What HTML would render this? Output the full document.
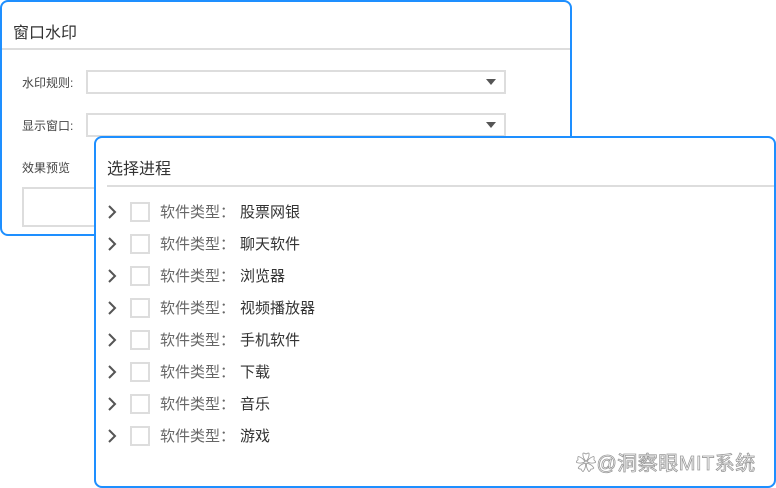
<!DOCTYPE html>
<html><head><meta charset="utf-8"><style>
*{margin:0;padding:0;box-sizing:border-box}
body{width:776px;height:488px;background:#fff;position:relative;overflow:hidden;font-family:"Liberation Sans","Noto Sans CJK SC",sans-serif;color:#333}
.p{position:absolute;border:2px solid #1e8fff;border-radius:8px;background:#fff}
.t{position:absolute;font-size:16px;color:#333;white-space:nowrap}
.l{position:absolute;font-size:12px;color:#444;white-space:nowrap}
.sel{position:absolute;left:84px;width:420px;height:24px;border:2px solid #ddd;background:#fff}
.sel:after{content:"";position:absolute;right:8px;top:7px;width:10px;height:6px;background:#555;clip-path:polygon(0 0,100% 0,50% 100%)}
.row{position:absolute;left:106px;height:24px;font-size:15px;color:#666;white-space:nowrap}
.row svg{position:absolute;left:0;top:5px}
.cb{position:absolute;left:24px;top:2px;width:20px;height:20px;border:2px solid #ddd}
.row span{position:absolute;left:54px;top:1px}
.row b{font-weight:normal;color:#333;padding-left:5px}
</style></head><body>
<div class="p" style="left:0;top:0;width:572px;height:236px">
 <div class="t" style="left:11px;top:17px">窗口水印</div>
 <div style="position:absolute;left:0;right:0;top:46px;height:2px;background:#ddd"></div>
 <div class="l" style="left:20px;top:72px">水印规则:</div>
 <div class="sel" style="top:68px"></div>
 <div class="l" style="left:20px;top:115px">显示窗口:</div>
 <div class="sel" style="top:111px"></div>
 <div class="l" style="left:20px;top:157px">效果预览</div>
 <div style="position:absolute;left:20px;top:185px;width:120px;height:40px;border:2px solid #ddd"></div>
</div>
<div class="p" style="left:94px;top:136px;width:682px;height:352px">
 <div class="t" style="left:11px;top:17px">选择进程</div>
 <div style="position:absolute;left:11px;right:0;top:47px;height:2px;background:#ddd"></div>
</div>
<div class="row" style="top:200px"><svg width="12" height="14"><path d="M3 1l6 6-6 6" fill="none" stroke="#555" stroke-width="2"/></svg><div class="cb"></div><span>软件类型：<b>股票网银</b></span></div>
<div class="row" style="top:232px"><svg width="12" height="14"><path d="M3 1l6 6-6 6" fill="none" stroke="#555" stroke-width="2"/></svg><div class="cb"></div><span>软件类型：<b>聊天软件</b></span></div>
<div class="row" style="top:264px"><svg width="12" height="14"><path d="M3 1l6 6-6 6" fill="none" stroke="#555" stroke-width="2"/></svg><div class="cb"></div><span>软件类型：<b>浏览器</b></span></div>
<div class="row" style="top:296px"><svg width="12" height="14"><path d="M3 1l6 6-6 6" fill="none" stroke="#555" stroke-width="2"/></svg><div class="cb"></div><span>软件类型：<b>视频播放器</b></span></div>
<div class="row" style="top:328px"><svg width="12" height="14"><path d="M3 1l6 6-6 6" fill="none" stroke="#555" stroke-width="2"/></svg><div class="cb"></div><span>软件类型：<b>手机软件</b></span></div>
<div class="row" style="top:360px"><svg width="12" height="14"><path d="M3 1l6 6-6 6" fill="none" stroke="#555" stroke-width="2"/></svg><div class="cb"></div><span>软件类型：<b>下载</b></span></div>
<div class="row" style="top:392px"><svg width="12" height="14"><path d="M3 1l6 6-6 6" fill="none" stroke="#555" stroke-width="2"/></svg><div class="cb"></div><span>软件类型：<b>音乐</b></span></div>
<div class="row" style="top:424px"><svg width="12" height="14"><path d="M3 1l6 6-6 6" fill="none" stroke="#555" stroke-width="2"/></svg><div class="cb"></div><span>软件类型：<b>游戏</b></span></div>
<div style="position:absolute;left:576px;top:447px;font-size:20px;letter-spacing:0.5px;color:#fff;-webkit-text-stroke:0.8px #999;white-space:nowrap">✿@洞察眼MIT系统</div>
</body></html>
